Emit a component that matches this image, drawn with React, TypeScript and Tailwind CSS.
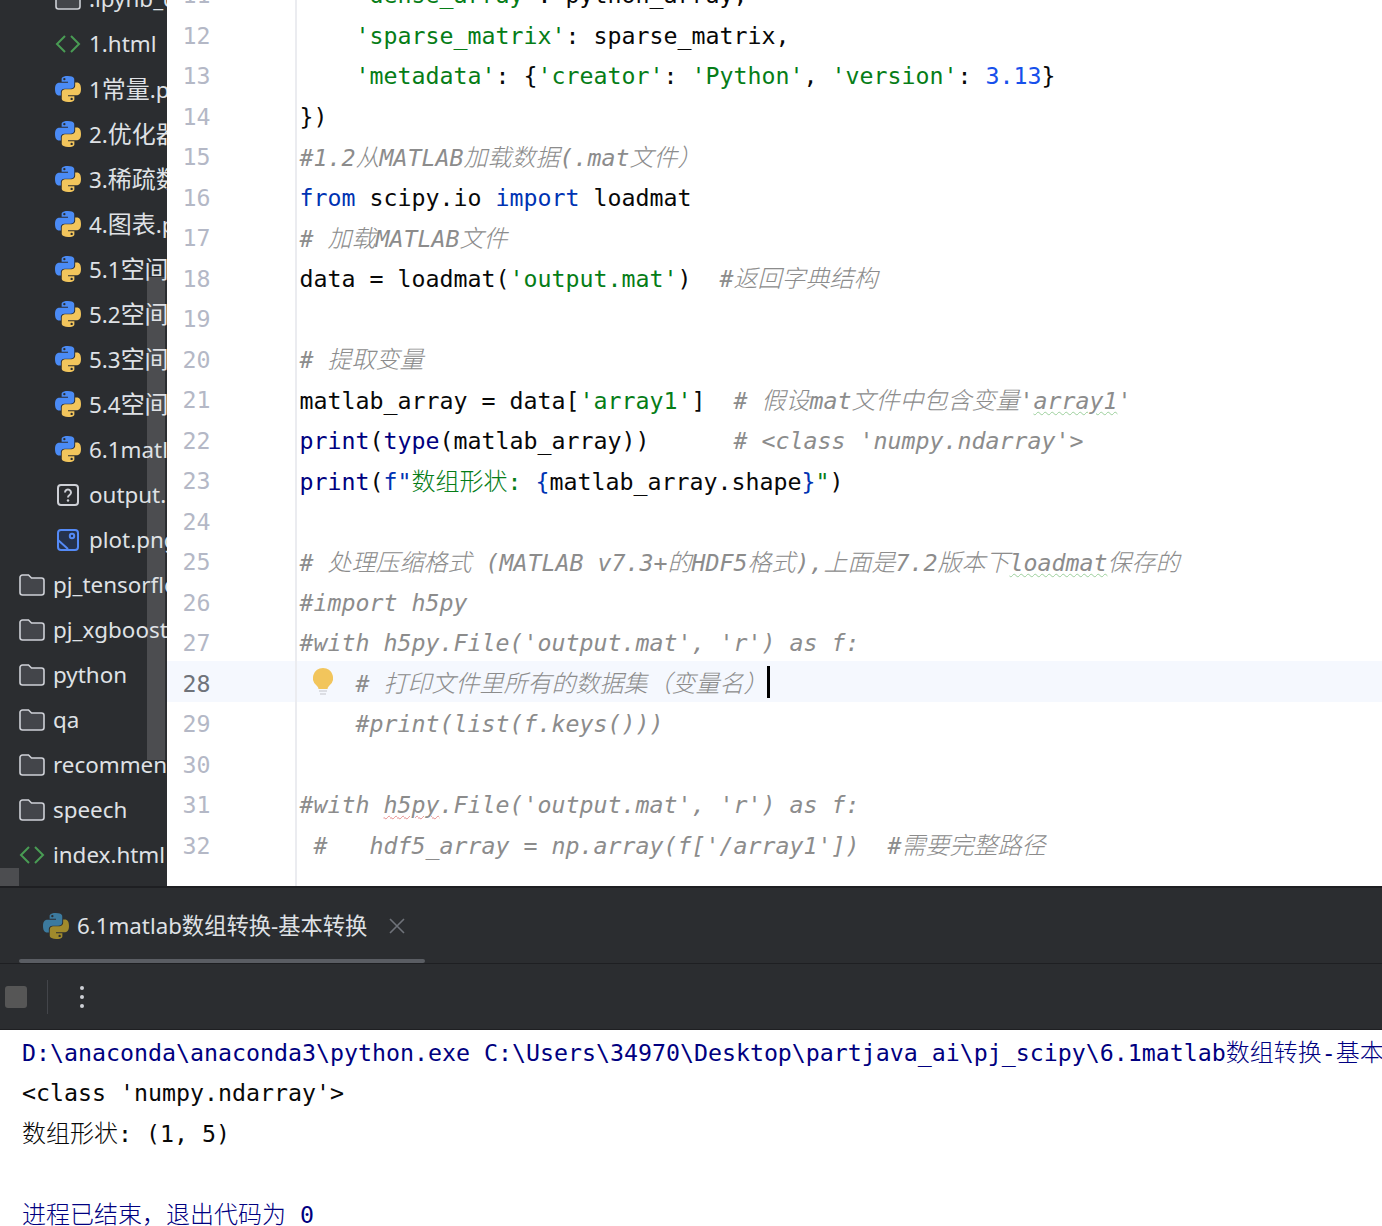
type Kind = "plain" | "kw" | "str" | "num" | "call" | "cm" | "bad" | "warn";
type Token = [string, Kind];
type FileRow = { name: string; icon: "python" | "html" | "unknown" | "image" | "folder"; nested?: boolean };

const kindClass: Record<Kind, string> = {
  plain: "text-[#080808]",
  kw: "text-[#0033b3]",
  str: "text-[#067d17]",
  num: "text-[#1750eb]",
  call: "text-[#000080]",
  cm: "text-[#8c8c8c] italic",
  bad: "text-[#8c8c8c] italic underline decoration-wavy decoration-[#e58c8c] decoration-1 underline-offset-[2px]",
  warn: "text-[#8c8c8c] italic underline decoration-wavy decoration-[#9ccf9c] decoration-1 underline-offset-[2px]",
};

const files: FileRow[] = [
  { name: ".ipynb_checkpoints", icon: "folder", nested: true },
  { name: "1.html", icon: "html", nested: true },
  { name: "1常量.py", icon: "python", nested: true },
  { name: "2.优化器.py", icon: "python", nested: true },
  { name: "3.稀疏数组.py", icon: "python", nested: true },
  { name: "4.图表.py", icon: "python", nested: true },
  { name: "5.1空间数据.py", icon: "python", nested: true },
  { name: "5.2空间数据.py", icon: "python", nested: true },
  { name: "5.3空间数据.py", icon: "python", nested: true },
  { name: "5.4空间数据.py", icon: "python", nested: true },
  { name: "6.1matlab.py", icon: "python", nested: true },
  { name: "output.mat", icon: "unknown", nested: true },
  { name: "plot.png", icon: "image", nested: true },
  { name: "pj_tensorflow", icon: "folder" },
  { name: "pj_xgboost", icon: "folder" },
  { name: "python", icon: "folder" },
  { name: "qa", icon: "folder" },
  { name: "recommend", icon: "folder" },
  { name: "speech", icon: "folder" },
  { name: "index.html", icon: "html" },
];

const code: { n: number; tokens: Token[] }[] = [
  { n: 11, tokens: [["    ", "plain"], ["'dense_array'", "str"], [": python_array,", "plain"]] },
  { n: 12, tokens: [["    ", "plain"], ["'sparse_matrix'", "str"], [": sparse_matrix,", "plain"]] },
  {
    n: 13,
    tokens: [
      ["    ", "plain"],
      ["'metadata'", "str"],
      [": {", "plain"],
      ["'creator'", "str"],
      [": ", "plain"],
      ["'Python'", "str"],
      [", ", "plain"],
      ["'version'", "str"],
      [": ", "plain"],
      ["3.13", "num"],
      ["}", "plain"],
    ],
  },
  { n: 14, tokens: [["})", "plain"]] },
  { n: 15, tokens: [["#1.2从MATLAB加载数据(.mat文件）", "cm"]] },
  { n: 16, tokens: [["from", "kw"], [" scipy.io ", "plain"], ["import", "kw"], [" loadmat", "plain"]] },
  { n: 17, tokens: [["# 加载MATLAB文件", "cm"]] },
  { n: 18, tokens: [["data = loadmat(", "plain"], ["'output.mat'", "str"], [")  ", "plain"], ["#返回字典结构", "cm"]] },
  { n: 19, tokens: [] },
  { n: 20, tokens: [["# 提取变量", "cm"]] },
  {
    n: 21,
    tokens: [
      ["matlab_array = data[", "plain"],
      ["'array1'", "str"],
      ["]  ", "plain"],
      ["# 假设mat文件中包含变量'", "cm"],
      ["array1", "warn"],
      ["'", "cm"],
    ],
  },
  {
    n: 22,
    tokens: [
      ["print", "call"],
      ["(", "plain"],
      ["type", "call"],
      ["(matlab_array))      ", "plain"],
      ["# <class 'numpy.ndarray'>", "cm"],
    ],
  },
  {
    n: 23,
    tokens: [
      ["print", "call"],
      ["(", "plain"],
      ["f\"", "kw"],
      ["数组形状: ", "str"],
      ["{", "kw"],
      ["matlab_array.shape", "plain"],
      ["}", "kw"],
      ["\"", "str"],
      [")", "plain"],
    ],
  },
  { n: 24, tokens: [] },
  {
    n: 25,
    tokens: [
      ["# 处理压缩格式 (MATLAB v7.3+的HDF5格式),上面是7.2版本下", "cm"],
      ["loadmat", "warn"],
      ["保存的", "cm"],
    ],
  },
  { n: 26, tokens: [["#import h5py", "cm"]] },
  { n: 27, tokens: [["#with h5py.File('output.mat', 'r') as f:", "cm"]] },
  { n: 28, tokens: [["    ", "plain"], ["# 打印文件里所有的数据集（变量名）", "cm"]] },
  { n: 29, tokens: [["    #print(list(f.keys()))", "cm"]] },
  { n: 30, tokens: [] },
  { n: 31, tokens: [["#with ", "cm"], ["h5py", "bad"], [".File('output.mat', 'r') as f:", "cm"]] },
  { n: 32, tokens: [[" #   hdf5_array = np.array(f['/array1'])  #需要完整路径", "cm"]] },
];

// CJK runs are a bit wider than the mono cell / 0.6, so they get their own size
function Txt({ text }: { text: string }) {
  const parts = text.split(/([\u3000-\u9fff\uff00-\uffef]+)/);
  return (
    <>
      {parts.map((part, i) =>
        i % 2 === 1 ? (
          <span key={i} className="text-[24px] font-light">
            {part}
          </span>
        ) : (
          <span key={i}>{part}</span>
        ),
      )}
    </>
  );
}

function PythonIcon({ dim }: { dim?: boolean }) {
  return (
    <svg viewBox="2 2 20 20" className="h-[26px] w-[26px] shrink-0">
      <path
        fill={dim ? "#3c7a9e" : "#4b8bf5"}
        d="M11.9 2C6.8 2 7.1 4.2 7.1 4.2v2.3h4.9v.7H5.2S2 6.8 2 12s2.8 5 2.8 5h1.7v-2.4s-.1-2.8 2.8-2.8h4.8s2.7 0 2.7-2.6V4.6S17.2 2 11.9 2zM9.2 3.5a.9.9 0 110 1.8.9.9 0 010-1.8z"
      />
      <path
        fill={dim ? "#a08a2c" : "#f2c55c"}
        d="M12.1 22c5.1 0 4.8-2.2 4.8-2.2v-2.3H12v-.7h6.8s3.2.4 3.2-4.8-2.8-5-2.8-5h-1.7v2.4s.1 2.8-2.8 2.8H9.9s-2.7 0-2.7 2.6v4.6S6.8 22 12.1 22zm2.7-1.5a.9.9 0 110-1.8.9.9 0 010 1.8z"
      />
    </svg>
  );
}

function FileIcon({ icon }: { icon: FileRow["icon"] }) {
  if (icon === "python") return <PythonIcon />;
  if (icon === "html") {
    return (
      <svg viewBox="0 0 26 26" className="h-[26px] w-[26px] shrink-0" fill="none" stroke="#499c54" strokeWidth="2">
        <path d="M10 5 2 13l8 8M16 5l8 8-8 8" />
      </svg>
    );
  }
  if (icon === "unknown") {
    return (
      <svg viewBox="0 0 26 26" className="h-[26px] w-[26px] shrink-0" fill="none">
        <rect x="3" y="3" width="20" height="20" rx="3" stroke="#ced0d6" strokeWidth="2" />
        <path d="M10 10.500a3 3 0 1 1 4.600 2.500c-1 .7-1.600 1.200-1.600 2.500" stroke="#ced0d6" strokeWidth="2" />
        <circle cx="13" cy="18.500" r="1.200" fill="#ced0d6" />
      </svg>
    );
  }
  if (icon === "image") {
    return (
      <svg viewBox="0 0 26 26" className="h-[26px] w-[26px] shrink-0" fill="none" stroke="#548af7" strokeWidth="2">
        <rect x="3" y="3" width="20" height="20" rx="3" fill="#25324d" />
        <circle cx="17" cy="9" r="2.200" />
        <path d="m3 13 10 9" />
      </svg>
    );
  }
  return (
    <svg viewBox="0 0 26 26" className="h-[26px] w-[26px] shrink-0">
      <path
        d="M1 5.500A2.500 2.500 0 0 1 3.500 3h6l3 3h10A2.500 2.500 0 0 1 25 8.500v12a2.500 2.500 0 0 1-2.500 2.500h-19A2.500 2.500 0 0 1 1 20.500z"
        fill="#43454a"
        stroke="#ced0d6"
        strokeWidth="1.600"
      />
    </svg>
  );
}

function Sidebar() {
  return (
    <aside className="relative h-full w-[167px] shrink-0 overflow-hidden bg-[#2b2d30]">
      <div className="absolute top-[277px] right-[2px] h-[483px] w-[18px] bg-[#4c4d50]" />
      <div className="absolute bottom-0 left-0 h-[18px] w-[19px] bg-[#4c4d50]" />
      <div className="relative -mt-[23.5px] font-['Noto_Sans','Noto_Sans_CJK_SC',sans-serif] text-[22.4px] text-[#dfe1e5]">
        {files.map((file) => (
          <div
            key={file.name}
            className={`flex h-[45.06px] items-center gap-[8px] whitespace-nowrap ${file.nested ? "pl-[55px]" : "pl-[19px]"}`}
          >
            <FileIcon icon={file.icon} />
            <span className="[&_span]:font-normal">
              <Txt text={file.name} />
            </span>
          </div>
        ))}
      </div>
    </aside>
  );
}

function CodeRow({ n, tokens }: { n: number; tokens: Token[] }) {
  const current = n === 28;
  return (
    <div className={`relative flex h-[40.5px] items-center ${current ? "bg-[#f5f8fe]" : ""}`}>
      <div
        className={`flex h-full w-[130px] shrink-0 items-center border-r-2 border-[#ebecf0] pt-[6px] pl-[15.5px] ${
          current ? "text-[#6f737a]" : "text-[#b4b8c6]"
        }`}
      >
        {n}
      </div>
      <div className="flex items-center whitespace-pre pl-[2.5px]">
        <span className="block pt-[6px]">
          {tokens.map(([text, kind], i) => (
            <span key={i} className={kindClass[kind]}>
              <Txt text={text} />
            </span>
          ))}
        </span>
        {current ? <span className="mt-[1px] -ml-[1px] h-[32px] w-[3px] bg-black" /> : null}
      </div>
      {current ? (
        <svg viewBox="0 0 20 28" className="absolute top-[7px] left-[146px] h-[28px] w-[20px]">
          <path d="M10 0a10 10 0 0 0-6 18c1 1 1.500 2 1.500 3h9c0-1 .5-2 1.500-3a10 10 0 0 0-6-18z" fill="#f2c55c" />
          <path d="M6 23h8M7 26h6" stroke="#d3d5db" strokeWidth="1.600" />
        </svg>
      ) : null}
    </div>
  );
}

function Editor() {
  return (
    <main className="h-full min-w-0 flex-1 overflow-hidden bg-white font-['DejaVu_Sans_Mono','Noto_Sans_CJK_SC',monospace] text-[23.25px]">
      <div className="-mt-[27.5px] flex h-[913.5px] flex-col">
        {code.map((row) => (
          <CodeRow key={row.n} n={row.n} tokens={row.tokens} />
        ))}
        <div className="w-[130px] flex-1 border-r-2 border-[#ebecf0]" />
      </div>
    </main>
  );
}

function RunPanel() {
  return (
    <section className="h-[144px] shrink-0 border-t-2 border-b border-[#1e1f22] bg-[#2b2d30]">
      <div className="flex h-[71px] items-center pt-[5px] pl-[43px] font-['Noto_Sans','Noto_Sans_CJK_SC',sans-serif] text-[22.3px] text-[#dfe1e5]">
        <PythonIcon dim />
        <span className="ml-[8px] whitespace-nowrap">6.1matlab数组转换-基本转换</span>
        <svg viewBox="0 0 16 16" className="ml-[22px] h-[16px] w-[16px]" stroke="#6f737a" strokeWidth="1.600">
          <path d="m1 1 14 14M15 1 1 15" />
        </svg>
      </div>
      <div className="ml-[19px] h-[4px] w-[406px] rounded-full bg-[#5a5d63]" />
      <div className="flex h-[66px] items-center border-t border-[#1e1f22] pl-[5px]">
        <div className="h-[22px] w-[22px] rounded-[3px] bg-[#565656]" />
        <div className="ml-[20px] h-[34px] w-px bg-[#43454a]" />
        <div className="ml-[32px] flex flex-col gap-[5px]">
          <span className="h-[4px] w-[4px] rounded-full bg-[#ced0d6]" />
          <span className="h-[4px] w-[4px] rounded-full bg-[#ced0d6]" />
          <span className="h-[4px] w-[4px] rounded-full bg-[#ced0d6]" />
        </div>
      </div>
    </section>
  );
}

function Console() {
  return (
    <section className="min-h-0 flex-1 overflow-hidden whitespace-pre bg-white pt-[2.5px] pl-[22px] font-['DejaVu_Sans_Mono','Noto_Sans_CJK_SC',monospace] text-[23.25px] text-[#080808]">
      <div className="flex h-[40.5px] items-center text-[#000080]">
        <span>
          <Txt text="D:\anaconda\anaconda3\python.exe C:\Users\34970\Desktop\partjava_ai\pj_scipy\6.1matlab数组转换-基本转换.py" />
        </span>
      </div>
      <div className="flex h-[40.5px] items-center">&lt;class 'numpy.ndarray'&gt;</div>
      <div className="flex h-[40.5px] items-center">
        <span>
          <Txt text="数组形状: (1, 5)" />
        </span>
      </div>
      <div className="h-[40.5px]" />
      <div className="flex h-[40.5px] items-center text-[#000080]">
        <span>
          <Txt text="进程已结束，退出代码为 0" />
        </span>
      </div>
    </section>
  );
}

export default function App() {
  return (
    <div className="flex h-[1226px] w-[1382px] flex-col overflow-hidden bg-white">
      <div className="flex h-[886px] shrink-0">
        <Sidebar />
        <Editor />
      </div>
      <RunPanel />
      <Console />
    </div>
  );
}
